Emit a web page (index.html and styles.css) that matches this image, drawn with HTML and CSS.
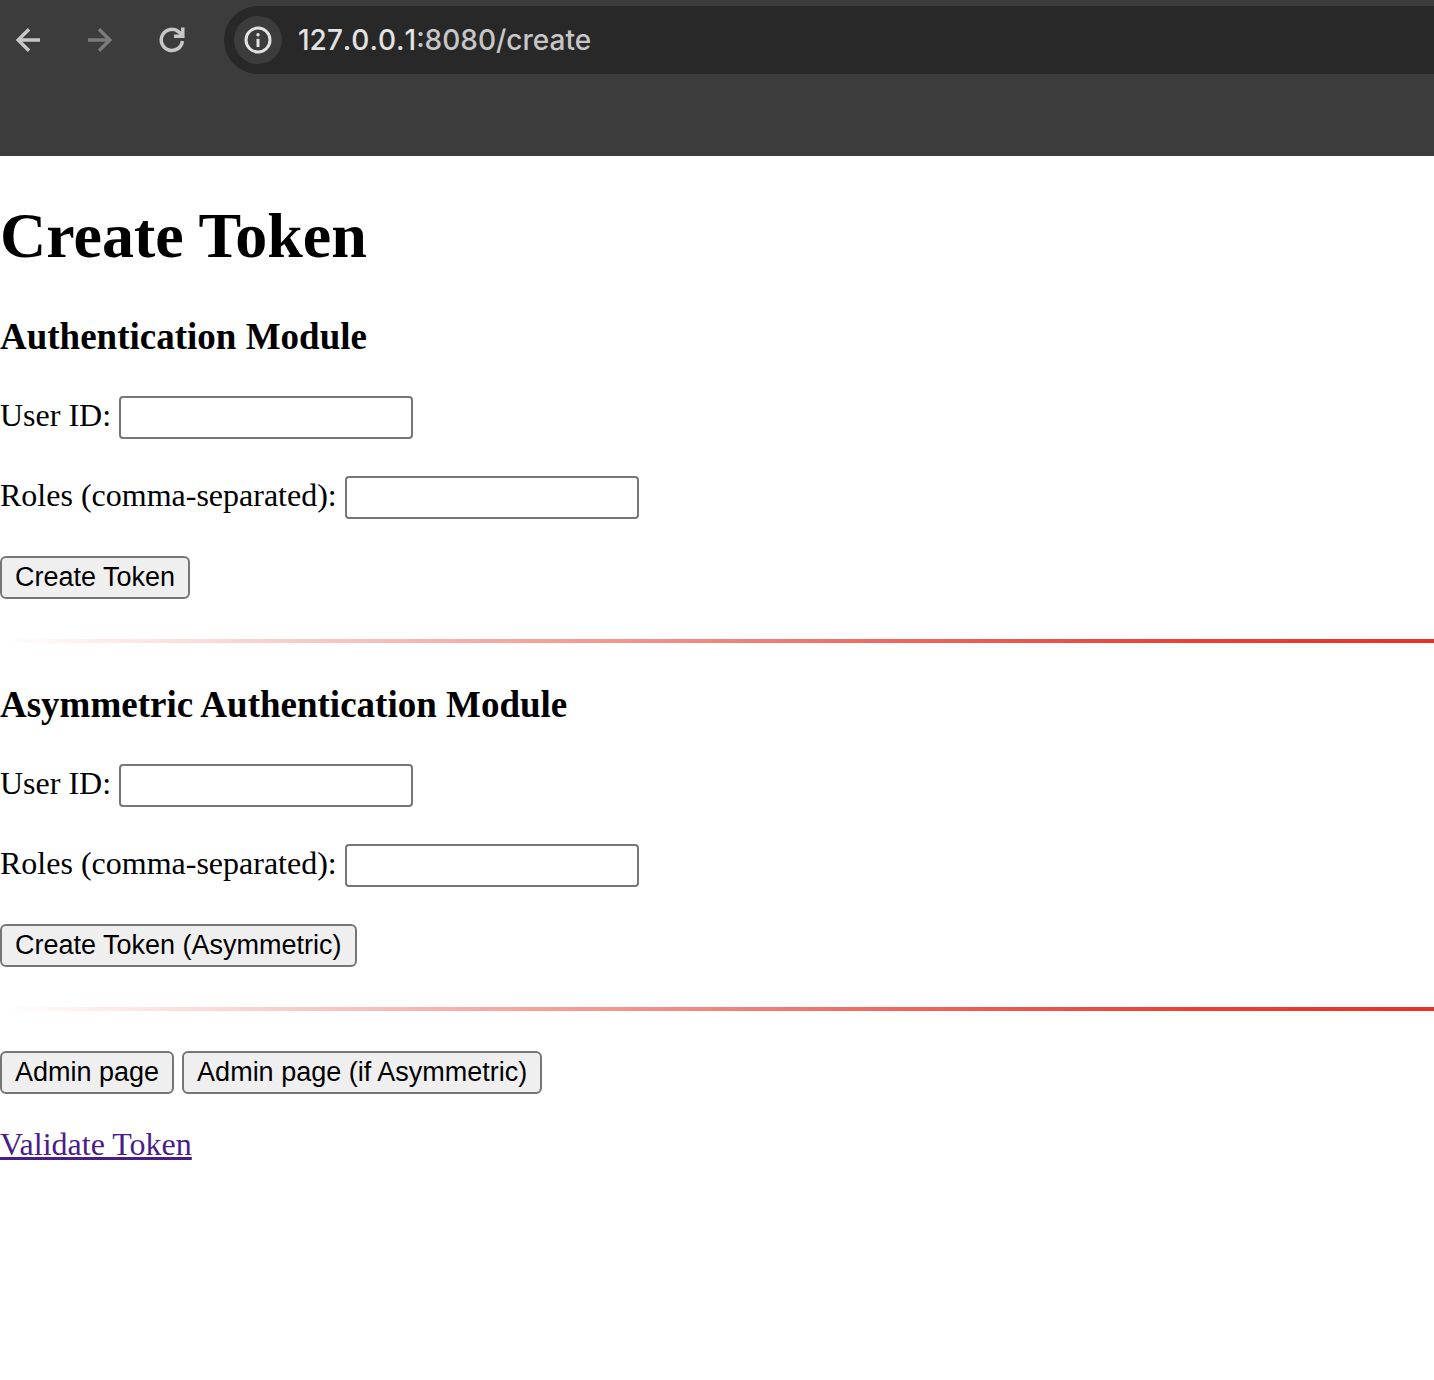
FILE: index.html
```html
<!DOCTYPE html>
<html lang="en">
<head>
  <meta charset="utf-8">
  <meta name="viewport" content="width=device-width, initial-scale=1">
  <title>Create Token</title>
  <link rel="stylesheet" href="styles.css">
</head>
<body>
  <header class="browser-bar">
    <nav class="nav-buttons" aria-label="Browser navigation">
      <button class="nav-button" type="button" aria-label="Back">
        <svg class="icon icon-arrow" viewBox="0 0 36 36"><path d="M30 18H9M19 7.2L8.2 18L19 28.8"/></svg>
      </button>
      <button class="nav-button nav-button-off" type="button" aria-label="Forward" disabled>
        <svg class="icon icon-arrow" viewBox="0 0 36 36"><path d="M6 18H27M17 7.2L27.8 18L17 28.8"/></svg>
      </button>
      <button class="nav-button" type="button" aria-label="Reload">
        <svg class="icon icon-arrow" viewBox="0 0 36 36"><path d="M28.4 19A10.6 10.6 0 1 1 25 10.1L28 13.1"/><path d="M28.8 5.5V14.3H20"/></svg>
      </button>
    </nav>
    <div class="address">
      <button class="site-info" type="button" aria-label="Site information">
        <svg class="icon icon-line" viewBox="0 0 36 36"><circle cx="18" cy="18" r="12"/><path d="M18 16.8V25"/><circle class="dot" cx="18" cy="12.7" r="1.7"/></svg>
      </button>
      <span class="url"><span class="url-host">127.0.0.1</span>:8080/create</span>
    </div>
  </header>

  <main class="page">
    <h1 class="title">Create Token</h1>

    <h3 class="module-title">Authentication Module</h3>
    <form class="token-form">
      <div class="field">
        <label for="user-id">User ID:</label>
        <input class="text-input" id="user-id" type="text">
      </div>
      <div class="field">
        <label for="roles">Roles (comma-separated):</label>
        <input class="text-input" id="roles" type="text">
      </div>
      <button class="button" type="button">Create Token</button>
    </form>

    <hr class="divider">

    <h3 class="module-title">Asymmetric Authentication Module</h3>
    <form class="token-form">
      <div class="field">
        <label for="asym-user-id">User ID:</label>
        <input class="text-input" id="asym-user-id" type="text">
      </div>
      <div class="field">
        <label for="asym-roles">Roles (comma-separated):</label>
        <input class="text-input" id="asym-roles" type="text">
      </div>
      <button class="button" type="button">Create Token (Asymmetric)</button>
    </form>

    <hr class="divider">

    <div class="actions">
      <button class="button" type="button">Admin page</button>
      <button class="button" type="button">Admin page (if Asymmetric)</button>
    </div>
    <a class="validate-link" href="#validate">Validate Token</a>
  </main>
</body>
</html>
```

FILE: styles.css
```css
* {
  box-sizing: border-box;
}

body {
  margin: 0;
  background: #fff;
  color: #000;
  font-family: "Liberation Serif", "Times New Roman", serif;
  font-size: 32px;
  line-height: 37px;
}

/* Browser toolbar */
.browser-bar {
  display: flex;
  align-items: flex-start;
  height: 156px;
  padding-top: 6px;
  background: #3c3c3c;
}

.nav-buttons {
  display: flex;
  flex: none;
  gap: 36px;
  padding: 16px 34px 0 10px;
}

.nav-button,
.site-info {
  display: flex;
  align-items: center;
  justify-content: center;
  padding: 0;
  border: 0;
  background: none;
  color: #c7c7c7;
}

.nav-button {
  width: 36px;
  height: 36px;
}

.nav-button-off {
  color: #7b7b7b;
}

.icon {
  width: 36px;
  height: 36px;
  fill: none;
  stroke: currentColor;
}

.icon-arrow {
  stroke-width: 3.5;
}

.icon-line {
  stroke-width: 3;
}

.icon-line .dot {
  fill: currentColor;
  stroke: none;
}

.address {
  display: flex;
  flex: 1;
  align-items: center;
  gap: 16px;
  height: 68px;
  padding-left: 10px;
  border-radius: 34px 0 0 34px;
  background: #282828;
}

.site-info {
  flex: none;
  width: 48px;
  height: 48px;
  border-radius: 50%;
  background: #3c3c3c;
  color: #e3e3e3;
}

.url {
  color: #c7c7c7;
  font-family: Inter, sans-serif;
  font-size: 28px;
  font-weight: 500;
  line-height: 36px;
  white-space: nowrap;
}

.url-host {
  color: #e3e3e3;
  font-kerning: none;
}

/* Page content */
.page {
  padding: 43px 0 32px;
}

.title {
  margin: 0 0 42px;
  font-size: 64px;
  line-height: 74px;
}

.module-title {
  margin: 0 0 37px;
  font-size: 37px;
  line-height: 44px;
}

.token-form {
  display: flex;
  flex-direction: column;
  align-items: flex-start;
  gap: 37px;
}

.field {
  display: flex;
  align-items: baseline;
  gap: 8px;
  height: 43px;
}

.text-input {
  width: 294px;
  height: 43px;
  padding: 2px 4px;
  border: 2px solid #767676;
  border-radius: 4px;
  background: #fff;
  font-family: "Liberation Sans", Arial, sans-serif;
  font-size: 27px;
}

.button {
  height: 43px;
  padding: 0 13px 2px;
  border: 2px solid #767676;
  border-radius: 6px;
  background: #efefef;
  color: #000;
  font-family: "Liberation Sans", Arial, sans-serif;
  font-size: 27px;
  line-height: 36px;
}

.divider {
  height: 4px;
  margin: 40px 0;
  border: 0;
  background: linear-gradient(
    to right,
    rgb(234 48 34 / 0) 0%,
    rgb(234 48 34 / 0.34) 28%,
    rgb(234 48 34 / 0.74) 63%,
    rgb(234 48 34 / 0.9) 80%,
    rgb(234 48 34) 100%
  );
}

.actions {
  display: flex;
  gap: 8px;
  margin-bottom: 32px;
}

.validate-link {
  color: #4b1d87;
}
```
